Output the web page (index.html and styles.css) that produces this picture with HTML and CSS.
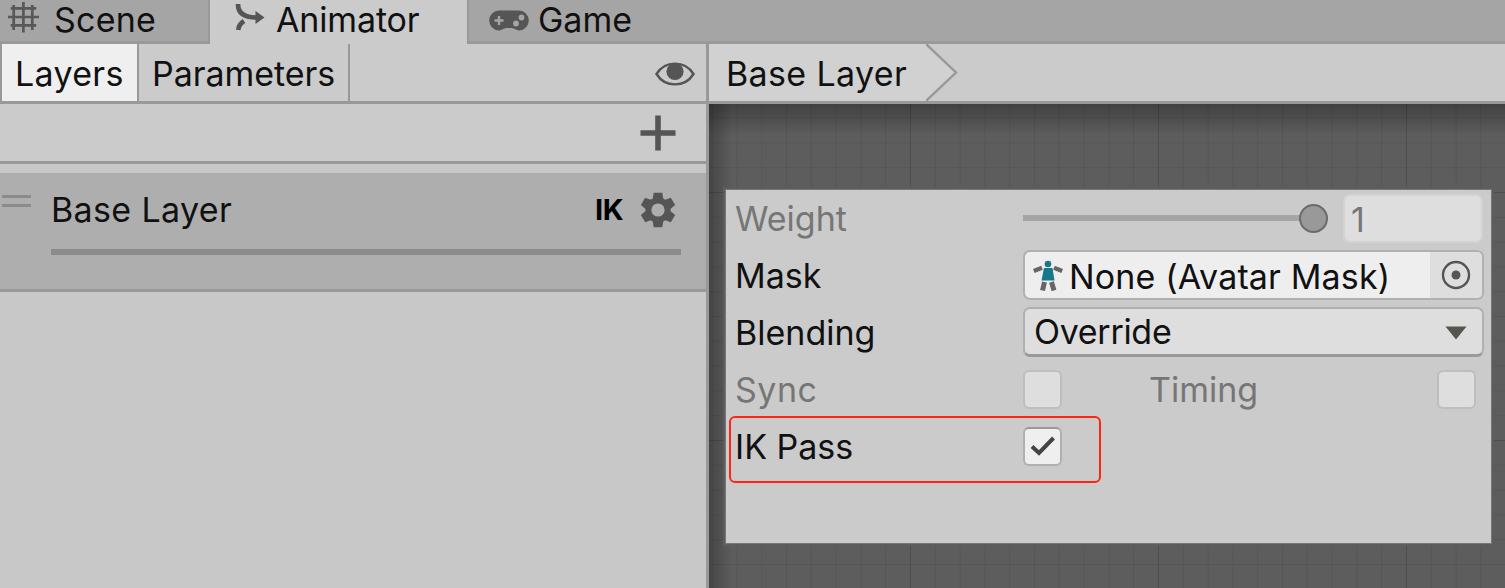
FILE: index.html
```html
<!DOCTYPE html>
<html lang="en">
<head>
    <meta charset="UTF-8">
    <meta name="viewport" content="width=device-width, initial-scale=1.0">
    <title>Animator</title>
    <link rel="stylesheet" href="styles.css">
</head>
<body>
    <div class="window">
        <div class="tabs">
            <div class="tab scene">
                <svg class="icon-grid" width="32" height="32" viewBox="0 0 32 32">
                    <path d="M5.700 3v25M15.400 0v30.500M24.300 3v25M2.700 6.300h25.500M0 15h31M2.700 23.300h25.500" stroke="#585858" stroke-width="2.700" fill="none"/>
                </svg>
                <span>Scene</span>
            </div>
            <div class="tab animator active">
                <svg class="icon-animator" width="30" height="28" viewBox="0 0 30 28">
                    <path d="M3 1C3 10 9 14.500 21 14.500M3.200 27C3.700 23 5 20.500 9 18" stroke="#555" stroke-width="4.700" fill="none"/>
                    <path d="M20.500 8L29.500 14.500L20.500 21z" fill="#555"/>
                </svg>
                <span>Animator</span>
            </div>
            <div class="tab game">
                <svg class="icon-game" width="40" height="21" viewBox="0 0 40 21">
                    <path d="M10 0.500H30A9.800 10 0 0 1 30 20.500C27 20.500 25.500 18 22.500 18H17.500C14.500 18 13 20.500 10 20.500A9.800 10 0 0 1 10 0.500z" fill="#555"/>
                    <path d="M10 6v9M5.500 10.500h9" stroke="#a5a5a5" stroke-width="2.400"/>
                    <circle cx="32.500" cy="7.500" r="2.900" fill="#a5a5a5"/>
                    <circle cx="27" cy="13.500" r="2.900" fill="#a5a5a5"/>
                </svg>
                <span>Game</span>
            </div>
        </div>

        <div class="main">
            <div class="sidebar">
                <div class="toolbar">
                    <div class="button layers selected">Layers</div>
                    <div class="button parameters">Parameters</div>
                    <svg class="icon-eye" width="40" height="24" viewBox="0 0 40 24">
                        <path d="M1.500 12C10 -1.800 30 -1.800 38.500 12C30 25.800 10 25.800 1.500 12z" fill="none" stroke="#555" stroke-width="2.400"/>
                        <circle cx="20" cy="9.500" r="8.600" fill="#555"/>
                    </svg>
                </div>
                <div class="add-row">
                    <svg width="36" height="36" viewBox="0 0 36 36">
                        <path d="M18 0.500v35M0.500 18h35" stroke="#555" stroke-width="5.600"/>
                    </svg>
                </div>
                <div class="layer">
                    <div class="handle"></div>
                    <div class="layer-body">
                        <div class="layer-title">
                            <span class="layer-name">Base Layer</span>
                            <span class="ik">IK</span>
                            <svg class="icon-gear" width="36" height="36" viewBox="-18 -18 36 36">
                                <g fill="#555">
                                    <path id="tooth" d="M-5.500 -10L-4.300 -17.300H4.300L5.500 -10V10L4.300 17.300H-4.300L-5.500 10z"/>
                                    <use href="#tooth" transform="rotate(60)"/>
                                    <use href="#tooth" transform="rotate(120)"/>
                                    <circle r="12.600"/>
                                </g>
                                <circle r="6.600" fill="#aeaeae"/>
                            </svg>
                        </div>
                        <div class="layer-weight"></div>
                    </div>
                </div>
            </div>

            <div class="graph">
                <div class="breadcrumbs">
                    <div class="crumb">Base Layer</div>
                    <svg width="32" height="57" viewBox="0 0 32 57">
                        <path d="M0 0L30 28.500L0 57z" fill="#d1d1d1"/>
                        <path d="M0 0L30 28.500L0 57" fill="none" stroke="#999" stroke-width="2.400"/>
                    </svg>
                </div>
                <div class="canvas">
                    <div class="settings">
                        <div class="row disabled">
                            <label>Weight</label>
                            <div class="slider"><div class="knob"></div></div>
                            <div class="number">1</div>
                        </div>
                        <div class="row">
                            <label>Mask</label>
                            <div class="field object">
                                <svg class="icon-avatar" width="30" height="32" viewBox="0 0 30 32">
                                    <circle cx="15" cy="4" r="3.300" fill="#15798a"/>
                                    <path d="M11 8h8.500l2 12.500h-13z" fill="#15798a"/>
                                    <path d="M0.800 11L9 7.800M29.200 11L21 7.800" stroke="#666" stroke-width="4.400"/>
                                    <path d="M11.500 22L9.500 30.500M18.500 22L21 30.500" stroke="#666" stroke-width="5"/>
                                </svg>
                                <span>None (Avatar Mask)</span>
                                <div class="picker">
                                    <svg width="30" height="30" viewBox="0 0 30 30">
                                        <circle cx="15" cy="15" r="13" fill="none" stroke="#555" stroke-width="2.400"/>
                                        <circle cx="15" cy="15" r="4.500" fill="#555"/>
                                    </svg>
                                </div>
                            </div>
                        </div>
                        <div class="row">
                            <label>Blending</label>
                            <div class="field dropdown">
                                <span>Override</span>
                                <svg width="22" height="14" viewBox="0 0 22 14">
                                    <path d="M0.500 0.500h21L11 13.500z" fill="#54554c"/>
                                </svg>
                            </div>
                        </div>
                        <div class="row disabled">
                            <label class="sync">Sync</label>
                            <div class="checkbox"></div>
                            <label class="timing">Timing</label>
                            <div class="checkbox"></div>
                        </div>
                        <div class="row">
                            <label>IK Pass</label>
                            <div class="checkbox checked">
                                <svg width="26" height="22" viewBox="0 0 26 22">
                                    <path d="M2 11.500L9 18L23.500 3" fill="none" stroke="#444" stroke-width="4"/>
                                </svg>
                            </div>
                            <div class="highlight"></div>
                        </div>
                    </div>
                </div>
            </div>
        </div>
    </div>
</body>
</html>
```
FILE: styles.css
```css
* {
    box-sizing: border-box;
}

body {
    margin: 0;
    background-color: #c8c8c8;
    font-family: 'Inter', sans-serif;
    font-size: 34px;
    line-height: 40px;
    color: #111;
    white-space: nowrap;
}

svg {
    display: block;
    flex-shrink: 0;
}

.window {
    display: flex;
    flex-direction: column;
    width: 1505px;
    height: 588px;
    overflow: hidden;
}

.tabs {
    display: flex;
    height: 44px;
    background-color: #a5a5a5;
}

.tab {
    display: flex;
    align-items: flex-start;
    border-bottom: 3px solid #999;
}

.scene {
    width: 210px;
    padding-left: 8px;
    letter-spacing: 0.2px;
    border-right: 2px solid #999;
}

.scene span {
    margin-left: 14px;
}

.icon-grid {
    margin-top: 2px;
}

.animator {
    width: 257px;
    padding-left: 25px;
    letter-spacing: -0.15px;
    background-color: #cbcbcb;
    border-bottom-color: #cbcbcb;
}

.animator span {
    margin-left: 11px;
}

.icon-animator {
    margin-top: 3px;
}

.game {
    flex: 1;
    padding-left: 20px;
    border-left: 2px solid #999;
}

.game span {
    margin-left: 9px;
}

.icon-game {
    margin-top: 10px;
}

.main {
    display: flex;
    flex: 1;
}

.sidebar {
    width: 709px;
    border-right: 3px solid #999;
}

.toolbar {
    display: flex;
    align-items: center;
    height: 60px;
    background-color: #cbcbcb;
    border-left: 2px solid #999;
    border-bottom: 3px solid #999;
}

.button {
    height: 57px;
    line-height: 59px;
    border-right: 2px solid #999;
}

.layers {
    width: 137px;
    padding-left: 13px;
    letter-spacing: 0.3px;
}

.parameters {
    width: 211px;
    padding-left: 13px;
    letter-spacing: -0.05px;
}

.selected {
    background-color: #efefef;
}

.icon-eye {
    margin-left: auto;
    margin-right: 11px;
    margin-top: 2px;
}

.add-row {
    display: flex;
    justify-content: flex-end;
    align-items: center;
    height: 60px;
    padding-right: 30px;
    background-color: #cbcbcb;
    border-bottom: 3px solid #999;
}

.layer {
    display: flex;
    height: 119px;
    margin-top: 9px;
    padding-left: 2px;
    background-color: #aeaeae;
    border-bottom: 3px solid #999;
}

.handle {
    width: 29px;
    height: 12px;
    margin-top: 22px;
    border-top: 3px solid #8b8b8b;
    border-bottom: 3px solid #8b8b8b;
}

.layer-body {
    width: 630px;
    margin-left: 20px;
    padding-top: 17px;
}

.layer-title {
    display: flex;
    align-items: center;
    height: 40px;
    padding-right: 5px;
}

.layer-name {
    letter-spacing: 0.35px;
}

.ik {
    margin-left: auto;
    font-size: 29px;
    font-weight: 700;
    letter-spacing: -0.5px;
    color: #000;
}

.icon-gear {
    margin-left: 17px;
}

.layer-weight {
    height: 6px;
    margin-top: 19px;
    background-color: #8b8b8b;
}

.graph {
    display: flex;
    flex-direction: column;
    flex: 1;
}

.breadcrumbs {
    display: flex;
    height: 60px;
    background-color: #cbcbcb;
    border-bottom: 3px solid #999;
}

.crumb {
    width: 217px;
    padding-left: 17px;
    line-height: 59px;
    letter-spacing: 0.35px;
    background-color: #d1d1d1;
}

.canvas {
    flex: 1;
    padding: 86px 0 0 17px;
    background-color: #5d5d5d;
    /* shading along the edges, then major lines, then minor lines */
    background-image:
        linear-gradient(rgba(0, 0, 0, 0.3), transparent 32px),
        linear-gradient(90deg, rgba(0, 0, 0, 0.25), transparent 24px),
        linear-gradient(90deg, #4e4e4e 1.5px, transparent 1.5px),
        linear-gradient(#4e4e4e 1.5px, transparent 1.5px),
        linear-gradient(90deg, #565656 1.2px, transparent 1.2px),
        linear-gradient(#565656 1.2px, transparent 1.2px);
    background-size: auto, auto, 248px 248px, 248px 248px, 24.8px 24.8px, 24.8px 24.8px;
    background-position: 0 0, 0 0, 201px 88px, 201px 88px, 201px 88px, 201px 88px;
}

.settings {
    width: 765px;
    height: 353px;
    background-color: #cbcbcb;
    box-shadow: 0 0 0 1px #777, 0 0 0 3px #5d5d5d;
}

.row {
    position: relative;
    display: flex;
    align-items: center;
    height: 57px;
    padding-left: 9px;
}

.row label {
    width: 288px;
}

.row .sync {
    letter-spacing: 0.5px;
}

.disabled {
    color: #767676;
}

.slider {
    display: flex;
    align-items: center;
    justify-content: flex-end;
    width: 305px;
    height: 6px;
    margin-bottom: 1px;
    background: linear-gradient(#a5a5a5, #a5a5a5) no-repeat 0 0 / 290px 6px;
}

.knob {
    width: 29px;
    height: 29px;
    border: 2.5px solid #6b6b6b;
    border-radius: 50%;
    background-color: #999;
}

.number {
    width: 140px;
    height: 49px;
    margin-left: 15px;
    margin-bottom: 1px;
    padding-left: 6px;
    line-height: 47px;
    background-color: #dedede;
    border: 2px solid #d3d3d3;
    border-radius: 7px;
}

.field {
    display: flex;
    align-items: center;
    width: 461px;
    height: 50px;
    margin-bottom: 2px;
    border: 2px solid #b0b0b0;
    border-radius: 7px;
    overflow: hidden;
}

.object {
    padding-left: 8px;
    background-color: #eee;
}

.object span {
    margin: 4px 0 0 6px;
    letter-spacing: 0.15px;
}

.icon-avatar {
    margin-top: 2px;
}

.picker {
    display: flex;
    align-items: center;
    justify-content: center;
    width: 52px;
    height: 46px;
    margin-left: auto;
    background-color: #dedede;
}

.dropdown {
    justify-content: space-between;
    padding: 1px 15px 0 9px;
    letter-spacing: -0.3px;
    background-color: #dedede;
    border-bottom: 3px solid #999;
}

.dropdown svg {
    margin-top: 2px;
}

.checkbox {
    display: flex;
    align-items: center;
    justify-content: center;
    width: 39px;
    height: 39px;
    margin-bottom: 1px;
    background-color: #dedede;
    border: 2px solid #bebebe;
    border-radius: 6px;
}

.checked {
    background-color: #efefef;
    border-color: #b0b0b0;
    border-top-color: #999;
}

.row .timing {
    margin-left: 87px;
}

.highlight {
    position: absolute;
    left: 3px;
    top: -2px;
    width: 372px;
    height: 67px;
    border: 2px solid #ff2414;
    border-radius: 6px;
}
```
